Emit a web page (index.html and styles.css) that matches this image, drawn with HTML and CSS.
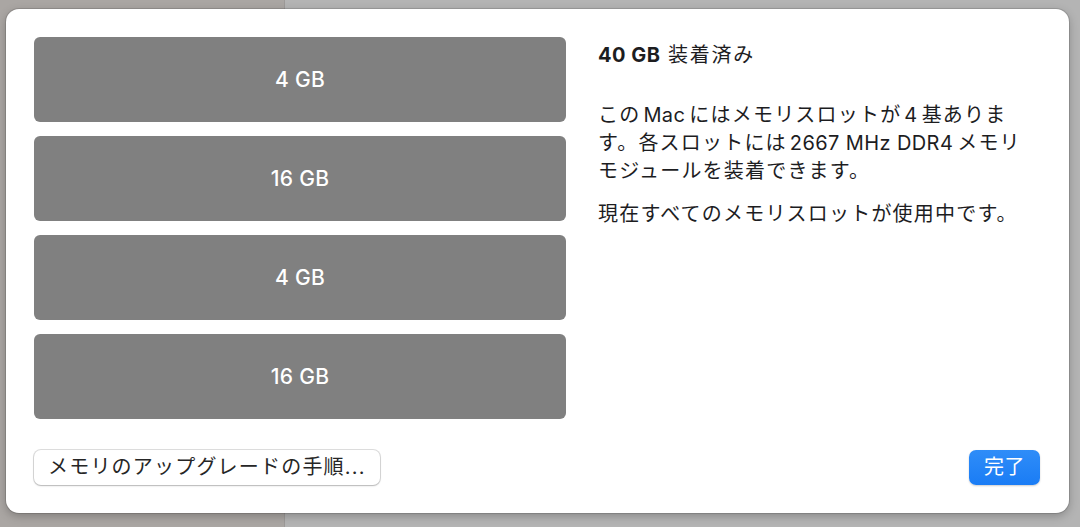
FILE: index.html
```html
<!DOCTYPE html>
<html lang="ja">
<head>
<meta charset="utf-8">
<title>メモリ</title>
<link rel="stylesheet" href="styles.css">
</head>
<body>
<div class="backdrop">
  <div class="side"></div>
  <div class="main"></div>
</div>

<div class="sheet">
  <div class="content">
    <div class="slots">
      <div class="slot">4 GB</div>
      <div class="slot">16 GB</div>
      <div class="slot">4 GB</div>
      <div class="slot">16 GB</div>
    </div>
    <div class="info">
      <h1 class="title"><b>40 GB</b> 装着済み</h1>
      <p class="para">この<span class="lat">Mac</span>にはメモリスロットが<span class="lat">4</span>基ありま<br>す。各スロットには<span class="lat">2667 MHz DDR4</span>メモリ<br>モジュールを装着できます。</p>
      <p class="para">現在すべてのメモリスロットが使用中です。</p>
    </div>
  </div>
  <div class="actions">
    <button class="btn">メモリのアップグレードの手順...</button>
    <button class="btn primary">完了</button>
  </div>
</div>
</body>
</html>
```

FILE: styles.css
```css
* { box-sizing: border-box; }

html, body {
  margin: 0;
  padding: 0;
  width: 1080px;
  height: 527px;
  overflow: hidden;
}

body {
  font-family: "Inter", "Noto Sans CJK JP", sans-serif;
  color: #1d1d1f;
  position: relative;
  background: #b2b2b2;
}

.backdrop {
  display: flex;
  height: 527px;
}

.side {
  width: 285px;
  background: #aaa6a3;
  border-right: 1px solid #9d9a98;
}

.main {
  flex: 1;
  background: #b4b4b4;
}

.sheet {
  position: absolute;
  left: 6px;
  top: 9px;
  width: 1063px;
  height: 504px;
  background: #ffffff;
  border-radius: 13px;
  box-shadow: 0 0 0 1px rgba(0, 0, 0, 0.12), 0 3px 10px rgba(0, 0, 0, 0.25);
  padding: 28px;
  display: flex;
  flex-direction: column;
}

.content {
  display: flex;
  gap: 32px;
  flex: 1;
}

.slots {
  width: 532px;
  display: flex;
  flex-direction: column;
  gap: 14px;
}

.slot {
  height: 85px;
  background: #808080;
  border-radius: 6px;
  color: #ffffff;
  font-size: 21px;
  font-weight: 500;
  letter-spacing: 0.3px;
  display: flex;
  align-items: center;
  justify-content: center;
}

.info {
  flex: 1;
  padding-top: 3px;
}

.title {
  margin: 0;
  font-size: 20px;
  font-weight: 400;
  line-height: 30px;
  letter-spacing: 1.8px;
}

.title b { font-weight: 700; letter-spacing: 0.5px; }

.para {
  margin: 0;
  font-size: 20px;
  line-height: 28px;
  letter-spacing: 1.2px;
}

.lat {
  margin: 0 4px 0 3px;
  letter-spacing: 0.4px;
}

.title + .para { margin-top: 31px; }
.para + .para { margin-top: 15px; }

.actions {
  display: flex;
  justify-content: space-between;
  align-items: center;
  margin-top: 29px;
  padding-right: 1px;
}

.btn {
  font-family: "Inter", "Noto Sans CJK JP", sans-serif;
  font-size: 20px;
  letter-spacing: 1.2px;
  height: 35px;
  padding: 0 14px;
  border: none;
  border-radius: 7px;
  background: #ffffff;
  color: #262626;
  box-shadow: 0 0 0 1px rgba(0, 0, 0, 0.13), 0 1px 2px rgba(0, 0, 0, 0.18);
  line-height: 35px;
}

.btn.primary {
  width: 71px;
  padding: 0;
  background: linear-gradient(#2f8df8, #1a7cf5);
  color: #ffffff;
  letter-spacing: 0.5px;
  box-shadow: 0 1px 2px rgba(0, 0, 0, 0.2);
}
```
